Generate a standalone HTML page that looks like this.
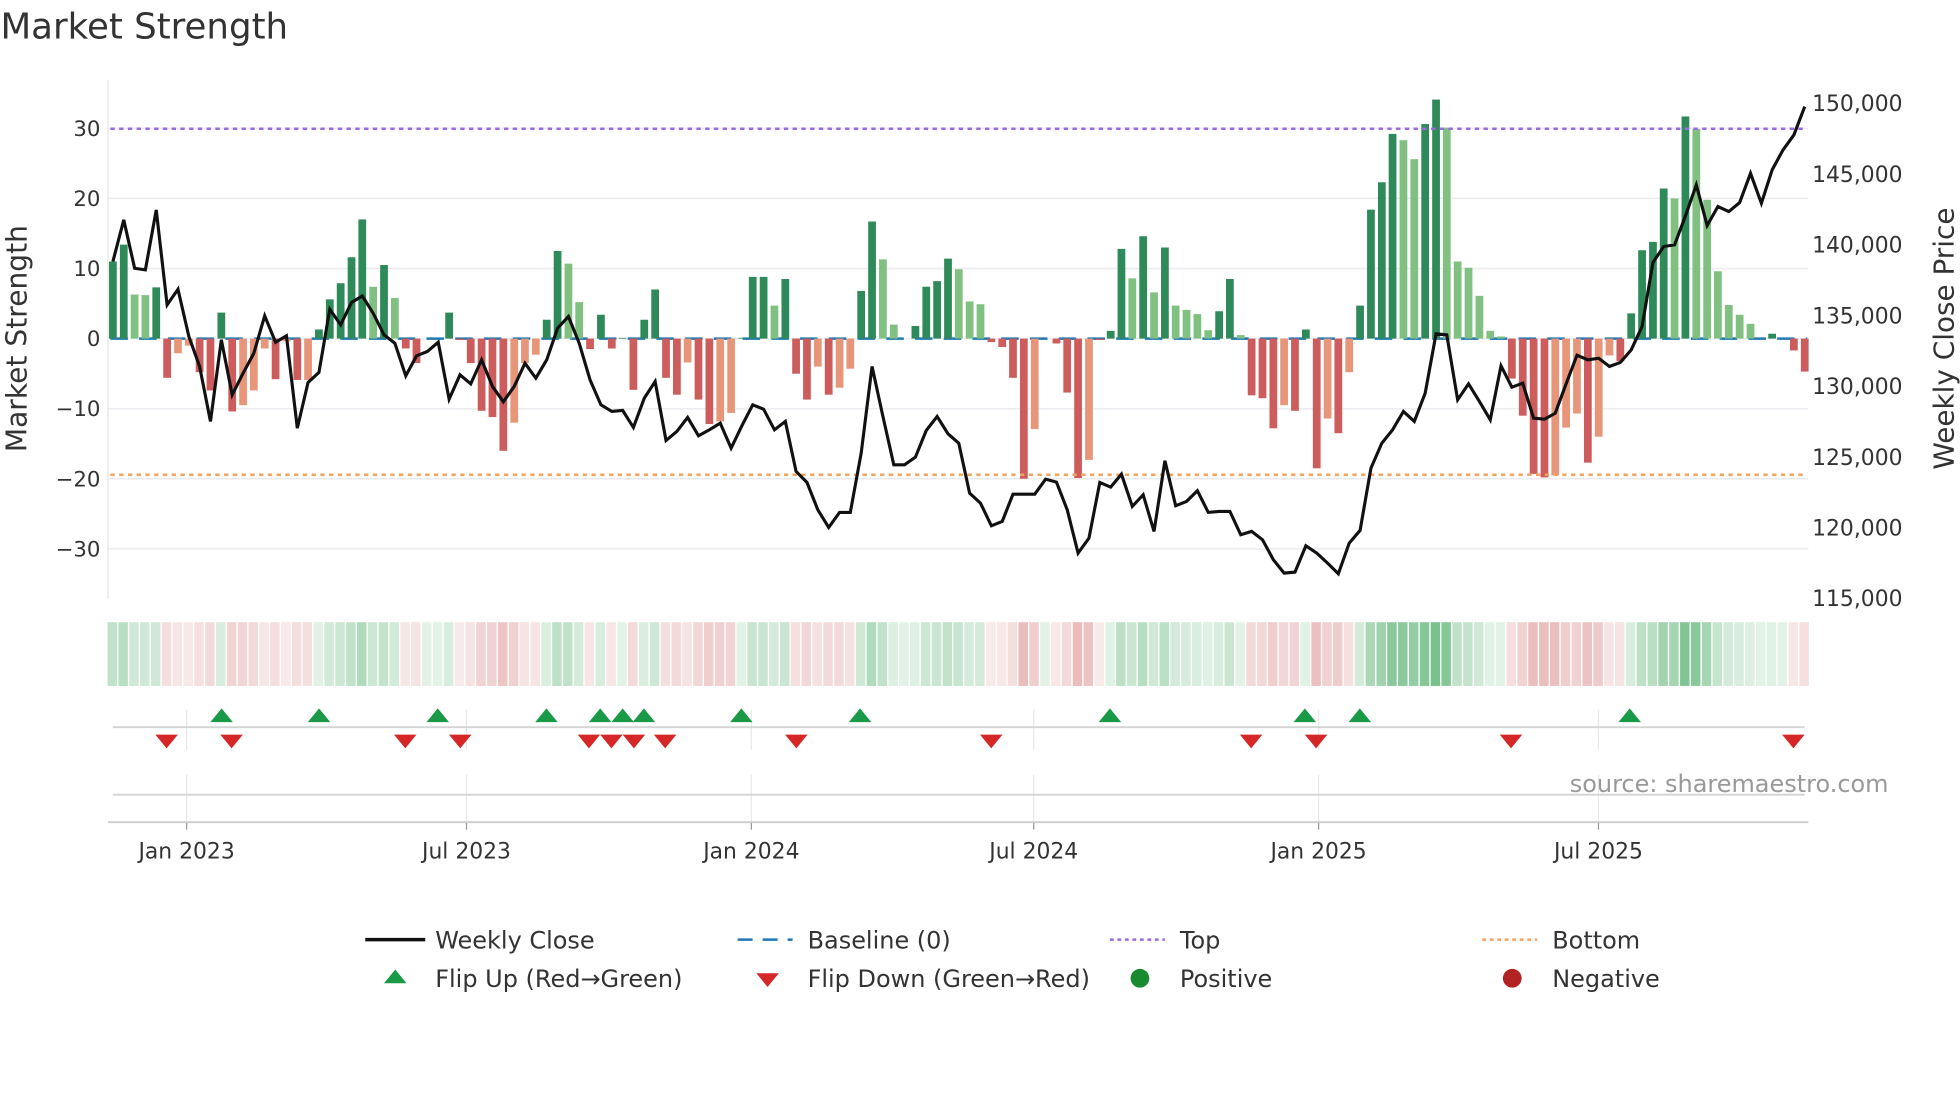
<!DOCTYPE html>
<html><head><meta charset="utf-8">
<style>
html,body{margin:0;padding:0;background:#fff;}
svg{display:block;}
text{font-family:"DejaVu Sans","Liberation Sans",sans-serif;fill:#333;}
</style></head>
<body>
<svg id="s" width="1960" height="1102" viewBox="0 0 1568 882" xmlns="http://www.w3.org/2000/svg">
<text x="0" y="31" font-size="28.5">Market Strength</text>
<g id="g"></g>
<text x="1256" y="634" font-size="19.2" style="fill:#999">source: sharemaestro.com</text>
<text transform="translate(21,271) rotate(-90)" text-anchor="middle" font-size="22.5">Market Strength</text>
<text transform="translate(1563,271) rotate(-90)" text-anchor="middle" font-size="22.3">Weekly Close Price</text>
<!-- legend -->
<line x1="292" y1="752" x2="340" y2="752" stroke="#111" stroke-width="2.8"/>
<text x="348" y="759" font-size="19.2">Weekly Close</text>
<line x1="590" y1="752" x2="634" y2="752" stroke="#1f77b4" stroke-width="2" stroke-dasharray="12,8" stroke-dashoffset="0"/>
<text x="646" y="759" font-size="19.2">Baseline (0)</text>
<line x1="888" y1="752" x2="932" y2="752" stroke="#9a6ae0" stroke-width="2" stroke-dasharray="3,3"/>
<text x="944" y="759" font-size="19.2">Top</text>
<line x1="1186" y1="752" x2="1230" y2="752" stroke="#f2a35e" stroke-width="2" stroke-dasharray="3,3"/>
<text x="1242" y="759" font-size="19.2">Bottom</text>
<polygon points="307,787 325,787 316,776" fill="#1a9a46"/>
<text x="348" y="790" font-size="19.2">Flip Up (Red→Green)</text>
<polygon points="605,779 623,779 614,790" fill="#d62728"/>
<text x="646" y="790" font-size="19.2">Flip Down (Green→Red)</text>
<circle cx="912" cy="783" r="7.5" fill="#1a8a2e"/>
<text x="944" y="790" font-size="19.2">Positive</text>
<circle cx="1210" cy="783" r="7.5" fill="#b22222"/>
<text x="1242" y="790" font-size="19.2">Negative</text>
</svg>
<script>
(function(){
var g=document.getElementById('g');var h='';
var X0=86,X1=1447;
function bx(i){return 90+i*8.68;}
[30,20,10,0,-10,-20,-30].forEach(function(v){var y=271-v*5.61;
 h+='<line x1="'+X0+'" y1="'+y+'" x2="'+X1+'" y2="'+y+'" stroke="#ebebf0" stroke-width="1.2"/>';
 h+='<text x="80" y="'+(y+6)+'" text-anchor="end" font-size="17">'+(v<0?'\u2212'+(-v):v)+'</text>';});
h+='<line x1="86" y1="64" x2="86" y2="479" stroke="#e6e6e6" stroke-width="1"/>';
for(var k=0;k<8;k++){var p=150000-k*5000;var y=83+k*56.6;
 h+='<text x="1450" y="'+(y+6)+'" font-size="17.5">'+p.toLocaleString('en-US')+'</text>';}
var B="11D 13.4D 6.3L 6.2L 7.3D -5.6D -2.1L -1L -4.8D -7.4D 3.7D -10.4D -9.5L -7.4L -1.4L -5.8D -0.4L -5.9D -5.9L 1.3D 5.6D 7.9D 11.6D 17D 7.4L 10.5D 5.8L -1.4D -3.5D 0D 0D 3.7D -0.2D -3.5D -10.3D -11.2D -16D -12L -3.5L -2.3L 2.7D 12.5D 10.7L 5.2L -1.5D 3.4D -1.4D 0.1D -7.3D 2.7D 7D -5.6D -8D -3.4L -8.7D -12.2D -11.8L -10.6L 0.1D 8.8D 8.8D 4.7L 8.5D -5D -8.7D -4L -8D -7L -4.3L 6.8D 16.7D 11.3L 2L 0D 1.8D 7.4D 8.2D 11.4D 9.9L 5.3L 4.9L -0.5D -1.2D -5.6D -20D -12.9L 0D -0.7D -7.7D -19.9D -17.3L -0.2D 1.1D 12.8D 8.6L 14.6D 6.6L 13D 4.7L 4.1L 3.5L 1.2L 3.9D 8.5D 0.5L -8.1D -8.5D -12.8D -9.5L -10.3D 1.3D -18.5D -11.4L -13.5D -4.8L 4.7D 18.4D 22.3D 29.2D 28.3L 25.6L 30.6D 34.1D 30.1L 11L 10.1L 6.1L 1.1L 0.3L -5.7D -11D -19.3D -19.8D -19.5L -12.7L -10.7L -17.7D -14L -2.4L -3.2D 3.6D 12.6D 13.8D 21.4D 20L 31.7D 29.9L 19.8L 9.6L 4.8L 3.4L 2.1L 0D 0.7D 0D -1.7D -4.7D".split(' ');
var vals=[];
h+='<line x1="88" y1="271" x2="1446" y2="271" stroke="#1f77b4" stroke-width="2" stroke-dasharray="14,9"/>';
B.forEach(function(s,i){var v=parseFloat(s),d=s.slice(-1)=='D';vals.push(v);
 var x=bx(i)-3.1,w=6.2,y0=271,y1=271-v*5.61;
 var c=v>=0?(d?'#2e8a58':'#80c080'):(d?'#cd5c5c':'#e8967a');
 if(Math.abs(v)>0.05)h+='<rect x="'+x.toFixed(1)+'" y="'+Math.min(y0,y1).toFixed(1)+'" width="'+w+'" height="'+Math.abs(y1-y0).toFixed(1)+'" fill="'+c+'"/>';
});
h+='<line x1="88" y1="103" x2="1446" y2="103" stroke="#9a6ae0" stroke-width="2" stroke-dasharray="3.5,3.5"/>';
h+='<line x1="88" y1="380" x2="1446" y2="380" stroke="#f2a35e" stroke-width="2" stroke-dasharray="3.5,3.5"/>';
var Z=[545,420,565,570,390,675,628,770,860,1025,780,945,880,820,708,787,768,1045,908,878,688,735,668,648,700,765,790,888,828,815,787,958,885,912,840,920,966,920,850,895,
840,745,710,790,900,975,995,992,1043,955,905,1082,1055,1013,1068,1050,1030,1105,1038,975,988,1050,1025,1175,1208,1290,1343,1298,1298,1120,860,1010,1155,1155,1132,1052,1010,1062,1090,
1240,1270,1338,1325,1243,1243,1243,1198,1207,1290,1420,1375,1208,1222,1183,1280,1245,1355,1143,1278,1265,1233,1298,1295,1295,1365,1355,1380,1440,1480,1477,1398,1420,1450,1482,1390,1352,1165,1090,
1050,995,1025,940,762,765,960,912,965,1020,858,922,910,1015,1018,1000,912,826,840,835,860,848,810,740,548,500,495,408,315,437,380,395,368,280,370,270,210,165,80];
var pts=Z.map(function(z,i){return bx(i).toFixed(1)+','+(64+z/3.75).toFixed(1);}).join(' ');
h+='<polyline points="'+pts+'" fill="none" stroke="#111" stroke-width="2.5" stroke-linejoin="miter"/>';
vals.forEach(function(v,i){var a=Math.min(1,0.18+Math.abs(v)/40*0.8);
 var c=v>=0?'rgba(50,160,80,'+(a*0.75).toFixed(2)+')':'rgba(200,80,80,'+(a*0.65).toFixed(2)+')';
 h+='<rect x="'+(bx(i)-4.3).toFixed(1)+'" y="498" width="7.6" height="51" fill="'+c+'"/>';});
[149,373,601,827,1055,1279].forEach(function(x){
 h+='<line x1="'+x+'" y1="568" x2="'+x+'" y2="600" stroke="#e8e8ee" stroke-width="1"/>';
 h+='<line x1="'+x+'" y1="620" x2="'+x+'" y2="658" stroke="#e8e8ee" stroke-width="1"/>';
 h+='<line x1="'+x+'" y1="658" x2="'+x+'" y2="664" stroke="#999" stroke-width="1"/>';});
h+='<line x1="90" y1="582" x2="1444" y2="582" stroke="#d4d4d4" stroke-width="1.5"/>';
h+='<line x1="90" y1="636" x2="1444" y2="636" stroke="#d4d4d4" stroke-width="1.5"/>';
h+='<line x1="86" y1="658" x2="1447" y2="658" stroke="#cccccc" stroke-width="1.5"/>';
[177,255,350,437,480,498,515,593,688,888,1044,1088,1304].forEach(function(x){
 h+='<polygon points="'+(x-9)+',578 '+(x+9)+',578 '+x+',567" fill="#1a9a46"/>';});
[133,185,324,368,471,489,507,532,637,793,1001,1053,1209,1435].forEach(function(x){
 h+='<polygon points="'+(x-9)+',588 '+(x+9)+',588 '+x+',599" fill="#d62728"/>';});
var L=[['Jan 2023',149],['Jul 2023',373],['Jan 2024',601],['Jul 2024',827],['Jan 2025',1055],['Jul 2025',1279]];
L.forEach(function(l){h+='<text x="'+l[1]+'" y="687" text-anchor="middle" font-size="17.5">'+l[0]+'</text>';});
g.innerHTML=h;
})();
</script>
</body></html>
